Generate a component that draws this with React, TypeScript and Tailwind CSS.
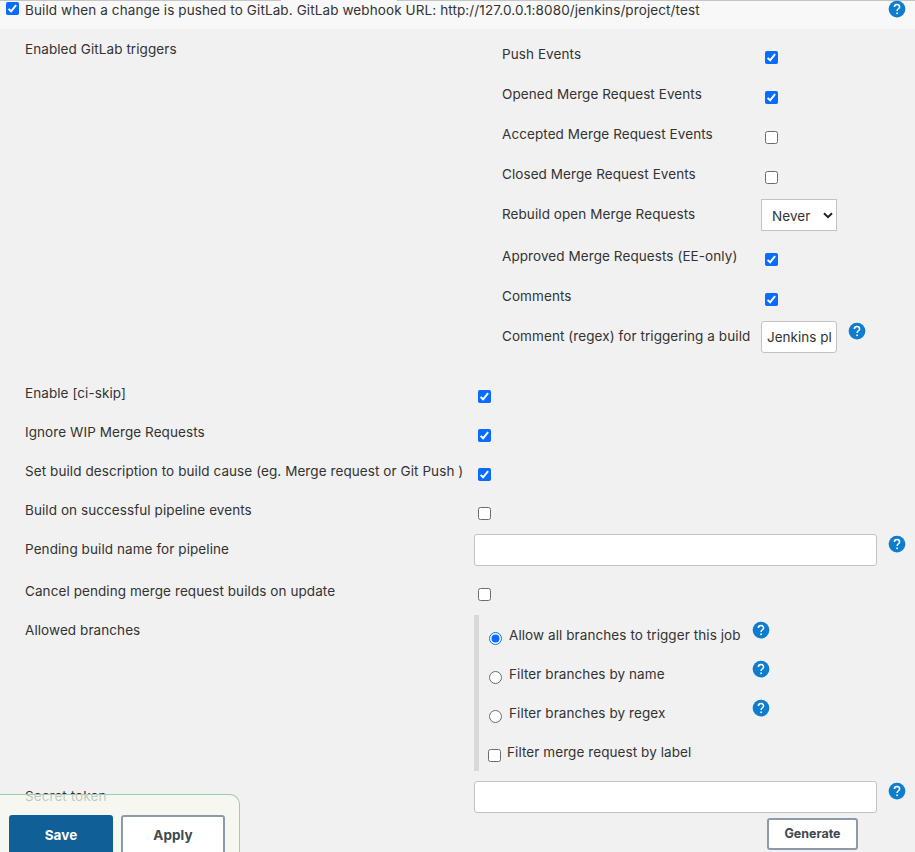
import type { ReactNode } from "react";

function Check({ on = false, className = "" }: { on?: boolean; className?: string }) {
  return (
    <svg className={`block h-[13px] w-[13px] shrink-0 ${className}`} viewBox="0 0 13 13" role="checkbox" aria-checked={on}>
      {on ? (
        <>
          <rect width="13" height="13" rx="1.7" fill="#096cfe" />
          <path d="M2.6 6.9 5.1 9.3 10.1 3.1" fill="none" stroke="#fff" strokeWidth="2" />
        </>
      ) : (
        <rect x="0.5" y="0.5" width="12" height="12" rx="2" fill="#fff" stroke="#6d6d6d" />
      )}
    </svg>
  );
}

function Radio({ on = false }: { on?: boolean }) {
  return (
    <svg className="mt-[17px] block h-[13px] w-[13px] shrink-0" viewBox="0 0 13 13" role="radio" aria-checked={on}>
      <circle cx="6.5" cy="6.5" r="6" fill="#fff" stroke={on ? "#096cfe" : "#6d6d6d"} />
      {on && <circle cx="6.5" cy="6.5" r="4" fill="#096cfe" />}
    </svg>
  );
}

function Help({ className = "" }: { className?: string }) {
  return (
    <svg className={`block h-[17px] w-[17px] shrink-0 overflow-visible ${className}`} viewBox="-0.5 0.4 17 17" aria-label="Help">
      <circle cx="8.5" cy="8.5" r="8.4" fill="#0f7dce" />
      <path d="M5.9 6.4C5.9 4.9 7 4 8.5 4s2.6.9 2.6 2.3c0 1.8-2.5 2-2.5 4" fill="none" stroke="#fff" strokeWidth="1.5" />
      <rect x="7.8" y="11.9" width="1.6" height="1.6" fill="#fff" />
    </svg>
  );
}

function Trigger({ label, tall = false, children }: { label: string; tall?: boolean; children: ReactNode }) {
  return (
    <div className={`flex items-start ${tall ? "h-[42px]" : "h-10"}`}>
      <span className="w-[259px] shrink-0 pt-[5px]">{label}</span>
      {children}
    </div>
  );
}

function Row({ label, height = "h-[39px]", children }: { label: string; height?: string; children: ReactNode }) {
  return (
    <div className={`flex items-start pl-[25px] ${height}`}>
      <span className="w-[449px] shrink-0 pt-[5px]">{label}</span>
      {children}
    </div>
  );
}

function Branch({ label, on }: { label: string; on?: boolean }) {
  return (
    <div className="flex h-[39px] items-start pl-[10px]">
      <Radio on={on} />
      <span className="ml-[7px] w-[243px] pt-[10px]">{label}</span>
      <Help className="mt-[7px]" />
    </div>
  );
}

const field = "h-8 shrink-0 rounded-[3px] border border-[#c3c3c3] bg-white outline-none";

export default function App() {
  return (
    <div className="relative h-[852px] w-[915px] overflow-hidden bg-[#f1f1f1] font-['Inter',sans-serif] text-[13.5px] leading-5 tracking-[0.08px] whitespace-nowrap text-[#333]">
      <header className="h-[29px] bg-[#f8f8f8]">
        <div className="flex h-px justify-between">
          <i className="w-[281px] bg-[#c5c5c5]" />
          <i className="w-[518px] bg-[#c5c5c5]" />
        </div>
        <div className="flex items-start pl-[6px]">
          <Check on className="mt-px" />
          <span className="-mt-px ml-[6px] w-[863px] tracking-[0.107px]">
            Build when a change is pushed to GitLab. GitLab webhook URL: http://127.0.0.1:8080/jenkins/project/test
          </span>
          <Help />
        </div>
      </header>

      <main>
        <section className="flex h-[349px] items-start pt-[10px] pl-[25px]">
          <span className="w-[477px] shrink-0">Enabled GitLab triggers</span>
          <div>
            <Trigger label="Push Events"><Check on className="mt-3 ml-1" /></Trigger>
            <Trigger label="Opened Merge Request Events"><Check on className="mt-3 ml-1" /></Trigger>
            <Trigger label="Accepted Merge Request Events"><Check className="mt-3 ml-1" /></Trigger>
            <Trigger label="Closed Merge Request Events"><Check className="mt-3 ml-1" /></Trigger>
            <Trigger label="Rebuild open Merge Requests" tall>
              <div className="flex h-8 w-[76px] items-center justify-between border border-[#c3c3c3] bg-white pr-[3px] pl-[10px]">
                <span className="pt-[2px]">Never</span>
                <svg className="h-[7px] w-[10px]" viewBox="0 0 10 7">
                  <path d="m1 1.2 4 4 4-4" fill="none" stroke="#222" strokeWidth="2" />
                </svg>
              </div>
            </Trigger>
            <Trigger label="Approved Merge Requests (EE-only)"><Check on className="mt-3 ml-1" /></Trigger>
            <Trigger label="Comments"><Check on className="mt-3 ml-1" /></Trigger>
            <Trigger label="Comment (regex) for triggering a build">
              <div className={`${field} w-[76px] pt-[5px] pl-[5px] tracking-normal`}>Jenkins pl</div>
              <Help className="mt-[2px] ml-[11px]" />
            </Trigger>
          </div>
        </section>

        <Row label="Enable [ci-skip]"><Check on className="mt-3 ml-1" /></Row>
        <Row label="Ignore WIP Merge Requests"><Check on className="mt-3 ml-1" /></Row>
        <Row label="Set build description to build cause (eg. Merge request or Git Push )"><Check on className="mt-3 ml-1" /></Row>
        <Row label="Build on successful pipeline events"><Check className="mt-3 ml-1" /></Row>
        <Row label="Pending build name for pipeline" height="h-[42px]">
          <input className={`${field} w-[403px]`} />
          <Help className="mt-[2px] ml-[11px]" />
        </Row>
        <Row label="Cancel pending merge request builds on update"><Check className="mt-3 ml-1" /></Row>
        <Row label="Allowed branches" height="h-[166px]">
          <div className="border-l-[5px] border-[#d9d9d9]">
            <Branch label="Allow all branches to trigger this job" on />
            <Branch label="Filter branches by name" />
            <Branch label="Filter branches by regex" />
            <div className="flex h-[39px] items-start pl-[9px]">
              <Check className="mt-[17px]" />
              <span className="ml-[6px] pt-[10px]">Filter merge request by label</span>
            </div>
          </div>
        </Row>
        <Row label="Secret token" height="h-[37px]">
          <input className={`${field} w-[403px]`} />
          <Help className="mt-[2px] ml-[11px]" />
        </Row>
        <div className="flex justify-end pr-[57px]">
          <button className="h-8 w-[91px] rounded-[3px] border-2 border-[#8c9ba7] bg-white text-[12.5px] font-bold tracking-normal text-[#414850]">
            Generate
          </button>
        </div>
      </main>

      <footer className="absolute top-[794px] left-0 flex h-[80px] w-[240px] gap-2 rounded-tr-[10px] border-t border-r border-[#9fcbb1] bg-[#f5f8ef]/75 pt-5 pl-[9px] text-[13.5px] font-bold">
        <button className="h-10 w-[104px] rounded-[3px] bg-[#115f97] text-white">Save</button>
        <button className="h-10 w-[104px] rounded-[3px] border-2 border-[#8c9ba7] bg-white text-[#414850]">Apply</button>
      </footer>
    </div>
  );
}
